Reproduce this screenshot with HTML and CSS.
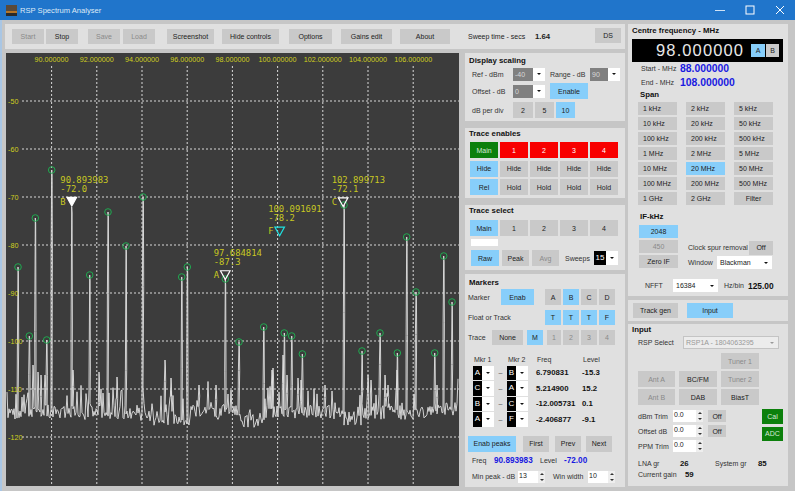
FILE: index.html
```html
<!DOCTYPE html>
<html lang="en">
  <head>
    <meta charset="UTF-8" />
    <title>RSP Spectrum Analyser</title>
    <link rel="stylesheet" href="styles.css">
  </head>
  <body>
    <header class="titlebar">
      <svg class="app-icon" width="11" height="11" viewBox="0 0 11 11">
        <rect width="11" height="11" fill="#5a4a3a" />
        <rect y="6" width="11" height="2" fill="#b5762a" />
        <rect y="8" width="11" height="3" fill="#2b2b2b" />
      </svg>
      <span class="app-title">RSP Spectrum Analyser</span>
      <div class="win-controls">
        <svg width="10" height="10" viewBox="0 0 10 10"><path d="M0 5.5h10" stroke="#cfe2f5" fill="none" /></svg>
        <svg width="10" height="10" viewBox="0 0 10 10"><rect x="1" y="1" width="8" height="8" stroke="#fff" fill="none" /></svg>
        <svg width="10" height="10" viewBox="0 0 10 10"><path d="M1 1l8 8M9 1l-8 8" stroke="#fff" fill="none" /></svg>
      </div>
    </header>

    <div class="main">
      <div class="left">
        <!-- Top toolbar -->
        <div class="toolbar">
          <button class="btn off w32">Start</button>
          <button class="btn w32 ml2">Stop</button>
          <button class="btn off w32 ml10">Save</button>
          <button class="btn off w32 ml3">Load</button>
          <button class="btn w47 ml12">Screenshot</button>
          <button class="btn w57 ml8">Hide controls</button>
          <button class="btn w43 ml10">Options</button>
          <button class="btn w51 ml9">Gains edit</button>
          <button class="btn w50 ml8">About</button>
          <span class="sweep-label">Sweep time - secs</span>
          <span class="sweep-value">1.64</span>
          <button class="btn ds-btn">DS</button>
        </div>

        <div class="left-body">
          <div class="plot"><svg id="plot" width="453" height="433" viewBox="6 53 453 433"></svg></div>

          <div class="mid">
            <section class="panel panel-scaling">
              <h3 class="title">Display scaling</h3>
              <div class="row h14">
                <span class="lbl w41">Ref - dBm</span>
                <span class="combo grey w32"><span class="val">-40</span><span class="arr"></span></span>
                <span class="lbl w40 ml5">Range - dB</span>
                <span class="combo grey w30"><span class="val">90</span><span class="arr"></span></span>
              </div>
              <div class="row h16 mt2">
                <span class="lbl w41">Offset - dB</span>
                <span class="combo grey w32"><span class="val">0</span><span class="arr"></span></span>
                <button class="btn on w38 ml5">Enable</button>
              </div>
              <div class="row h16 mt3">
                <span class="lbl w41">dB per div</span>
                <button class="btn w20">2</button>
                <button class="btn w19 ml2">5</button>
                <button class="btn on w19 ml2">10</button>
              </div>
            </section>

            <section class="panel panel-enables">
              <h3 class="title">Trace enables</h3>
              <div class="trace-grid">
                <button class="btn green">Main</button>
                <button class="btn red">1</button>
                <button class="btn red">2</button>
                <button class="btn red">3</button>
                <button class="btn red">4</button>
                <button class="btn on">Hide</button>
                <button class="btn">Hide</button>
                <button class="btn">Hide</button>
                <button class="btn">Hide</button>
                <button class="btn">Hide</button>
                <button class="btn on">Rel</button>
                <button class="btn">Hold</button>
                <button class="btn">Hold</button>
                <button class="btn">Hold</button>
                <button class="btn">Hold</button>
              </div>
            </section>

            <section class="panel panel-select">
              <h3 class="title">Trace select</h3>
              <div class="trace-grid mt3">
                <button class="btn on">Main</button>
                <button class="btn">1</button>
                <button class="btn">2</button>
                <button class="btn">3</button>
                <button class="btn">4</button>
              </div>
              <div class="colour-box"></div>
              <div class="row h16 mt4 ml1">
                <button class="btn on w28">Raw</button>
                <button class="btn w27 ml3">Peak</button>
                <button class="btn off w27 ml3">Avg</button>
                <span class="lbl w29 ml6">Sweeps</span>
                <span class="combo dark w24"><span class="val">15</span><span class="arr"></span></span>
              </div>
            </section>

            <section class="panel panel-markers">
              <h3 class="title">Markers</h3>
              <div class="row h16">
                <span class="lbl w33">Marker</span>
                <button class="btn on w33">Enab</button>
                <button class="btn w16 ml11">A</button>
                <button class="btn on w16 ml2">B</button>
                <button class="btn w16 ml2">C</button>
                <button class="btn w16 ml2">D</button>
              </div>
              <div class="row h15 mt5">
                <span class="lbl w77">Float or Track</span>
                <button class="btn on w16">T</button>
                <button class="btn on w16 ml2">T</button>
                <button class="btn on w16 ml2">T</button>
                <button class="btn on w16 ml2">F</button>
              </div>
              <div class="row h15 mt5">
                <span class="lbl w24">Trace</span>
                <button class="btn w31">None</button>
                <button class="btn on w16 ml4">M</button>
                <button class="btn off w14 ml4">1</button>
                <button class="btn off w16 ml2">2</button>
                <button class="btn off w16 ml2">3</button>
                <button class="btn off w16 ml2">4</button>
              </div>

              <div class="mk-table">
                <span class="mk-head">Mkr 1</span><span></span><span class="mk-head">Mkr 2</span><span></span><span class="mk-head">Freq</span><span class="mk-head">Level</span>

                <span class="combo dark"><span class="val">A</span><span class="arr"></span></span><span class="dash">&ndash;</span>
                <span class="combo dark"><span class="val">B</span><span class="arr"></span></span><span></span>
                <b>6.790831</b><b>-15.3</b>

                <span class="combo dark"><span class="val">C</span><span class="arr"></span></span><span class="dash">&ndash;</span>
                <span class="combo dark"><span class="val">A</span><span class="arr"></span></span><span></span>
                <b>5.214900</b><b>15.2</b>

                <span class="combo dark"><span class="val">B</span><span class="arr"></span></span><span class="dash">&ndash;</span>
                <span class="combo dark"><span class="val">C</span><span class="arr"></span></span><span></span>
                <b>-12.005731</b><b>0.1</b>

                <span class="combo dark"><span class="val">A</span><span class="arr"></span></span><span class="dash">&ndash;</span>
                <span class="combo dark"><span class="val">F</span><span class="arr"></span></span><span></span>
                <b>-2.406877</b><b>-9.1</b>
              </div>

              <div class="row h16 peaks">
                <button class="btn on w48">Enab peaks</button>
                <button class="btn w26 ml7">First</button>
                <button class="btn w26 ml6">Prev</button>
                <button class="btn w26 ml5">Next</button>
              </div>
              <div class="row h18 ml4">
                <span class="lbl w22">Freq</span>
                <b class="blue w46">90.893983</b>
                <span class="lbl w24">Level</span>
                <b class="blue">-72.00</b>
              </div>
              <div class="row h14 ml4">
                <span class="lbl w46">Min peak - dB</span>
                <span class="spin w27"><span class="val">13</span><span class="arrows"></span></span>
                <span class="lbl w35 ml8">Win width</span>
                <span class="spin w27"><span class="val">10</span><span class="arrows"></span></span>
              </div>
            </section>
          </div>
        </div>
      </div>

      <div class="right">
        <section class="panel panel-centre">
          <h3 class="title">Centre frequency - MHz</h3>
          <div class="freq-display">
            <span class="freq-digits">98.000000</span>
            <button class="btn on w14 h13">A</button>
            <button class="btn w13 h13 ml1">B</button>
          </div>
          <div class="row freq-row">
            <span class="lbl w39">Start - MHz</span><b class="freq-val">88.000000</b>
          </div>
          <div class="row freq-row">
            <span class="lbl w39">End - MHz</span><b class="freq-val">108.000000</b>
          </div>
          <h3 class="title sub">Span</h3>
          <div class="span-grid">
            <button class="btn">1 kHz</button>
            <button class="btn">2 kHz</button>
            <button class="btn">5 kHz</button>
            <button class="btn">10 kHz</button>
            <button class="btn">20 kHz</button>
            <button class="btn">50 kHz</button>
            <button class="btn">100 kHz</button>
            <button class="btn">200 kHz</button>
            <button class="btn">500 kHz</button>
            <button class="btn">1 MHz</button>
            <button class="btn">2 MHz</button>
            <button class="btn">5 MHz</button>
            <button class="btn">10 MHz</button>
            <button class="btn on">20 MHz</button>
            <button class="btn">50 MHz</button>
            <button class="btn">100 MHz</button>
            <button class="btn">200 MHz</button>
            <button class="btn">500 MHz</button>
            <button class="btn">1 GHz</button>
            <button class="btn">2 GHz</button>
            <button class="btn filter">Filter</button>
          </div>
          <h3 class="title sub if-title">IF-kHz</h3>
          <div class="if-section">
            <div class="if-col">
              <button class="btn on">2048</button>
              <button class="btn off">450</button>
              <button class="btn">Zero IF</button>
            </div>
            <div class="if-side">
              <div class="row h14">
                <span class="lbl w61">Clock spur removal</span>
                <button class="btn w24">Off</button>
              </div>
              <div class="row h14 mt1">
                <span class="lbl w29">Window</span>
                <span class="combo white w55"><span class="val">Blackman</span><span class="arr"></span></span>
              </div>
            </div>
          </div>
          <div class="row h14 nfft">
            <span class="lbl w28">NFFT</span>
            <span class="combo white w45"><span class="val">16384</span><span class="arr"></span></span>
            <span class="lbl w24 ml6">Hz/bin</span>
            <b class="hzbin">125.00</b>
          </div>
        </section>

        <div class="track-strip">
          <button class="btn w45">Track gen</button>
          <button class="btn on w46 ml9">Input</button>
        </div>

        <section class="panel panel-input">
          <h3 class="title">Input</h3>
          <div class="row h13 ml6">
            <span class="lbl w45">RSP Select</span>
            <span class="combo locked w96"><span class="val">RSP1A - 1804063295</span><span class="arr"></span></span>
          </div>
          <div class="ant-grid">
            <button class="btn off tuner1">Tuner 1</button>
            <button class="btn off">Ant A</button>
            <button class="btn">BC/FM</button>
            <button class="btn off">Tuner 2</button>
            <button class="btn off">Ant B</button>
            <button class="btn">DAB</button>
            <button class="btn">BiasT</button>
          </div>
          <div class="trim">
            <div class="trim-rows">
              <div class="row h15">
                <span class="lbl w35">dBm Trim</span>
                <span class="spin w30"><span class="val">0.0</span><span class="arrows"></span></span>
                <button class="btn w18 h12 ml5">Off</button>
              </div>
              <div class="row h15">
                <span class="lbl w35">Offset dB</span>
                <span class="spin w30"><span class="val">0.0</span><span class="arrows"></span></span>
                <button class="btn w18 h12 ml5">Off</button>
              </div>
              <div class="row h15">
                <span class="lbl w35">PPM Trim</span>
                <span class="spin w30"><span class="val">0.0</span><span class="arrows"></span></span>
              </div>
            </div>
            <div class="cal-col">
              <button class="btn green h15">Cal</button>
              <button class="btn green h14">ADC</button>
            </div>
          </div>
          <div class="row h12 ml6 gain-first">
            <span class="lbl w42">LNA gr</span><b class="w35">26</b>
            <span class="lbl w43">System gr</span><b>85</b>
          </div>
          <div class="row h11 ml6">
            <span class="lbl w47">Current gain</span><b>59</b>
          </div>
        </section>
      </div>
    </div>

    <script src="plot.js"></script>
  </body>
</html>
```

FILE: styles.css
```css
/* General Styling */
* {
  margin: 0;
  padding: 0;
  box-sizing: border-box;
}

body {
  width: 795px;
  height: 491px;
  overflow: hidden;
  background-color: #c6c6c6;
  font-family: "Liberation Sans", Arial, sans-serif;
  font-size: 7px;
  color: #222;
}

b {
  font-size: 7.8px;
  color: #111;
}

.titlebar {
  height: 20px;
  background-color: #2075cb;
  display: flex;
  align-items: center;
  padding-left: 6px;
  color: #dfeaf6;
}

.app-icon {
  margin-right: 3px;
}

.app-title {
  font-size: 7.6px;
}

.win-controls {
  margin-left: auto;
  display: flex;
  gap: 20px;
  padding-right: 10px;
}

.main {
  display: flex;
  height: 471px;
  padding: 4px 0 0 5px;
  gap: 5px;
  border-left: 2px solid #a9c6e4;
  margin-left: 0;
}

.left {
  width: 618px;
  margin-left: -2px;
}

/* Toolbar */
.toolbar {
  width: 620px;
  height: 25px;
  background-color: #e0e0e0;
  display: flex;
  align-items: center;
  padding-left: 7px;
}

.toolbar .btn {
  height: 15px;
}

.sweep-label {
  margin-left: 18px;
  width: 67px;
}

.sweep-value {
  font-size: 7.8px;
  font-weight: bold;
  width: 60px;
}

.toolbar .ds-btn {
  width: 26px;
  margin-top: -3px;
}

.left-body {
  display: flex;
  margin-top: 4px;
  padding-left: 1px;
  gap: 6px;
  width: 621px;
}

.plot {
  width: 453px;
  height: 433px;
  background-color: #3c3c3c;
}

.plot svg {
  display: block;
}

.plot text {
  font-family: "Liberation Sans", Arial, sans-serif;
  font-size: 7.2px;
  fill: #d0d020;
}

.plot text.mark {
  font-family: "DejaVu Sans Mono", monospace;
  font-size: 8.9px;
  fill: #c8c822;
}

.mid {
  width: 160px;
}

/* Panels */
.panel {
  background-color: #e0e0e0;
}

.title {
  font-size: 7.8px;
  font-weight: bold;
  height: 12px;
  line-height: 12px;
  color: #111;
}

.panel-scaling {
  height: 68px;
  padding: 2px 0 0 7px;
}

.panel-scaling .title {
  margin-left: -3px;
}

.panel-enables {
  height: 70px;
  margin-top: 7px;
  padding: 0 0 0 5px;
}

.panel-enables .title {
  height: 14px;
  line-height: 12px;
  margin-left: -1px;
}

.panel-select {
  height: 65px;
  margin-top: 7px;
  padding-left: 5px;
}

.panel-select .title {
  margin-left: -1px;
}

.panel-markers {
  height: 213px;
  margin-top: 4px;
  padding: 3px 0 0 3px;
}

.panel-markers .title {
  margin-left: 1px;
}

.trace-grid {
  display: grid;
  grid-template-columns: repeat(5, 28px);
  grid-auto-rows: 16px;
  gap: 2.5px 2px;
}

.colour-box {
  width: 27px;
  height: 7px;
  margin: 3px 0 0 1px;
  background-color: #fff;
}

.row {
  display: flex;
  align-items: center;
}

.lbl {
  flex-shrink: 0;
  white-space: nowrap;
  color: #333;
}

/* Buttons */
.btn {
  display: flex;
  align-items: center;
  justify-content: center;
  flex-shrink: 0;
  height: 100%;
  border: none;
  background-color: #c9c9c9;
  color: #222;
  font-family: inherit;
  font-size: 7px;
  white-space: nowrap;
}

.btn.on {
  background-color: #87cefa;
}

.btn.off {
  color: #8a8a8a;
}

.btn.green {
  background-color: #0c800c;
  color: #d8e8d8;
}

.btn.red {
  background-color: #f80000;
  color: #fff;
}

/* Combo boxes */
.combo {
  display: flex;
  height: 13px;
  flex-shrink: 0;
  background-color: #fff;
}

.combo .val {
  flex: 1;
  min-width: 0;
  padding-left: 2px;
  line-height: 13px;
  white-space: nowrap;
  overflow: hidden;
}

.combo .arr {
  width: 12px;
  position: relative;
}

.combo .arr::after {
  content: "";
  position: absolute;
  left: 4px;
  top: 50%;
  margin-top: -1px;
  border-left: 2px solid transparent;
  border-right: 2px solid transparent;
  border-top: 2px solid #111;
}

.combo.grey .val {
  background-color: #808080;
  color: #d8d8d8;
}

.combo.dark {
  height: 14.5px;
}

.combo.dark .val {
  background-color: #000;
  color: #fff;
  font-size: 8px;
  line-height: 14.5px;
  padding-left: 0;
  text-align: center;
}

.combo.white .val {
  padding-left: 3px;
}

.combo.locked {
  background-color: #ececec;
  border: 1px solid #c4c4c4;
  color: #999;
}

.combo.locked .val {
  line-height: 11px;
}

.combo.locked .arr::after {
  border-top-color: #999;
}

/* Number spinners */
.spin {
  display: flex;
  height: 12px;
  flex-shrink: 0;
  background-color: #fff;
}

.spin .val {
  flex: 1;
  padding-left: 1px;
  line-height: 10px;
}

.spin .arrows {
  width: 7px;
  position: relative;
  background-color: #eee;
}

.spin .arrows::before,
.spin .arrows::after {
  content: "";
  position: absolute;
  left: 1.5px;
  border-left: 2px solid transparent;
  border-right: 2px solid transparent;
}

.spin .arrows::before {
  top: 2px;
  border-bottom: 2px solid #333;
}

.spin .arrows::after {
  bottom: 2px;
  border-top: 2px solid #333;
}

/* Markers table */
.mk-table {
  display: grid;
  grid-template-columns: 21px 13px 21px 8px 46px auto;
  grid-template-rows: 12px repeat(4, 15.5px);
  align-items: center;
  margin: 8px 0 0 5px;
  height: 74px;
}

.mk-head {
  padding-left: 1px;
  color: #333;
}

.dash {
  text-align: center;
  color: #555;
}

.peaks {
  margin-top: 8.5px;
}

.blue {
  color: #1a1ae0;
  font-size: 8.2px;
}

/* Right column */
.right {
  width: 160px;
}

.panel-centre {
  height: 272px;
  padding: 1px 0 0 4px;
}

.freq-display {
  width: 151px;
  height: 23px;
  margin-top: 2px;
  background-color: #000;
  display: flex;
  align-items: center;
  justify-content: flex-end;
  padding-right: 4px;
}

.freq-digits {
  color: #e8e8e8;
  font-size: 16.5px;
  letter-spacing: 1.1px;
  margin-right: 7px;
}

.freq-row {
  height: 13.5px;
  padding-left: 9px;
}

.panel-centre .freq-row:first-of-type {
  margin-top: 1px;
}

.freq-val {
  color: #1a1ae0;
  font-size: 10.4px;
}

.title.sub {
  margin-left: 8px;
}

.span-grid {
  display: grid;
  grid-template-columns: repeat(3, 39px);
  grid-auto-rows: 12.7px;
  gap: 2.3px 9px;
  margin: 1px 0 0 6px;
}

.span-grid .btn {
  justify-content: flex-start;
  padding-left: 5px;
}

.span-grid .filter {
  justify-content: center;
  padding-left: 0;
}

.title.if-title {
  margin-top: 6px;
}

.if-section {
  display: flex;
  margin: 2px 0 0 7px;
}

.if-col {
  display: grid;
  grid-template-columns: 39px;
  grid-auto-rows: 13px;
  gap: 2px;
}

.if-side {
  margin: 16px 0 0 10px;
}

.nfft {
  margin: 9px 0 0 13px;
}

.hzbin {
  font-size: 8.4px;
}

.track-strip {
  height: 21px;
  margin-top: 4px;
  padding: 3px 5px;
  background-color: #e0e0e0;
  display: flex;
}

.panel-input {
  height: 162px;
  margin-top: 3px;
  padding-left: 4px;
}

.ant-grid {
  display: grid;
  grid-template-columns: 37px 38px 38px;
  grid-auto-rows: 16px;
  gap: 2px 4px;
  margin: 4px 0 0 6px;
}

.tuner1 {
  grid-column: 3;
}

.trim {
  display: flex;
  margin: 3.5px 0 0 6px;
}

.trim-rows {
  width: 124px;
}

.cal-col {
  width: 21px;
  display: flex;
  flex-direction: column;
  gap: 3px;
}

.gain-first {
  margin-top: 3.5px;
}

/* Sizes shared by many controls */
.h11 { height: 11px; }
.h12 { height: 12px; }
.h13 { height: 13px; }
.h14 { height: 14px; }
.h15 { height: 15px; }
.h16 { height: 16px; }
.h18 { height: 18px; }
.w13 { width: 13px; }
.w14 { width: 14px; }
.w16 { width: 16px; }
.w18 { width: 18px; }
.w19 { width: 19px; }
.w20 { width: 20px; }
.w22 { width: 22px; }
.w24 { width: 24px; }
.w26 { width: 26px; }
.w27 { width: 27px; }
.w28 { width: 28px; }
.w29 { width: 29px; }
.w30 { width: 30px; }
.w31 { width: 31px; }
.w32 { width: 32px; }
.w33 { width: 33px; }
.w35 { width: 35px; }
.w38 { width: 38px; }
.w39 { width: 39px; }
.w40 { width: 40px; }
.w41 { width: 41px; }
.w42 { width: 42px; }
.w43 { width: 43px; }
.w45 { width: 45px; }
.w46 { width: 46px; }
.w47 { width: 47px; }
.w48 { width: 48px; }
.w50 { width: 50px; }
.w51 { width: 51px; }
.w55 { width: 55px; }
.w57 { width: 57px; }
.w61 { width: 61px; }
.w77 { width: 77px; }
.w96 { width: 96px; }
.ml1 { margin-left: 1px; }
.ml2 { margin-left: 2px; }
.ml3 { margin-left: 3px; }
.ml4 { margin-left: 4px; }
.ml5 { margin-left: 5px; }
.ml6 { margin-left: 6px; }
.ml7 { margin-left: 7px; }
.ml8 { margin-left: 8px; }
.ml9 { margin-left: 9px; }
.ml10 { margin-left: 10px; }
.ml11 { margin-left: 11px; }
.ml12 { margin-left: 12px; }
.mt1 { margin-top: 1px; }
.mt2 { margin-top: 2px; }
.mt3 { margin-top: 3px; }
.mt4 { margin-top: 4px; }
.mt5 { margin-top: 5px; }
```

FILE: plot.js
```js
// Draws the spectrum trace, grid, peak circles and markers into the plot svg
const svg = document.getElementById("plot");
const NS = "http://www.w3.org/2000/svg";

function add(tag, attrs, text) {
  const el = document.createElementNS(NS, tag);
  for (const key in attrs) el.setAttribute(key, attrs[key]);
  if (text) el.textContent = text;
  svg.appendChild(el);
  return el;
}

// Fixed seed so the noise floor is the same on every load
let seed = 20240;
function rand() {
  seed = (seed * 1664525 + 1013904223) % 4294967296;
  return seed / 4294967296;
}

const freqX = (f) => 51.6 + (f - 90) * 22.6;
const dbY = (db) => 53 + (-40 - db) * 4.8;

// Peaks with a green circle, in pixels
const peaks = [
  [18, 267], [29.3, 336], [35.3, 218], [46.7, 340], [51.7, 170], [89.7, 275],
  [108, 212], [126, 246], [143, 197], [181.7, 277], [187.3, 267], [225.3, 279],
  [239, 342], [263.7, 327], [284.3, 333], [291.7, 336], [302.3, 354], [344, 205],
  [362, 351], [380, 333], [397.3, 353], [406.7, 237], [416, 292], [434.7, 353],
  [443.7, 256], [452, 302],
];

// Peaks hidden by a marker, and the smaller ones with no circle
const tallLines = [[71.7, 207]];
const smallPeaks = [
  [33, 365], [38, 372], [41, 375], [45, 375], [73, 370], [99, 372], [117, 377],
  [165, 360], [171, 378], [199, 385], [216, 385], [272, 370], [273, 368],
  [283, 355], [287, 375], [298, 378], [301, 380], [325, 385], [368, 375],
  [371, 380], [385, 375], [388, 385], [397, 370], [437, 385],
];

function floorY(x) {
  let base = 412;
  if (x > 140 && x < 190) base = 418;
  if (x > 240 && x < 265) base = 420;
  if (x > 340 && x < 365) base = 418;
  if (x > 425) base = 410;
  return base + (rand() - 0.5) * 15;
}

// Noise floor first, peaks are spliced in at their x position
const spikes = peaks.concat(tallLines).concat(smallPeaks).sort((a, b) => a[0] - b[0]);
const pts = [];
let next = 0;
for (let x = 7; x <= 458; x++) {
  while (next < spikes.length && spikes[next][0] <= x) {
    const [px, py] = spikes[next];
    const shoulder = py + (floorY(px) - py) * (0.35 + rand() * 0.4);
    pts.push([px - 0.6, shoulder], [px, py], [px + 0.4, py + 6], [px + 0.7, shoulder]);
    next++;
  }
  let y = floorY(x);
  if (rand() < 0.13) y -= 8 + rand() * 18;
  pts.push([x, y]);
}
add("polyline", {
  points: pts.map((p) => p[0].toFixed(1) + "," + p[1].toFixed(1)).join(" "),
  fill: "none",
  stroke: "#e2e2e2",
  "stroke-width": 0.9,
});

// Grid and scale labels
for (let i = 0; i < 9; i++) {
  const x = freqX(90 + i * 2);
  add("line", { x1: x, y1: 66, x2: x, y2: 486, stroke: "#d8d8d8", "stroke-dasharray": "2 2" });
  const label = (90 + i * 2).toFixed(6);
  add("text", { x: x, y: 62, "text-anchor": "middle" }, label);
}
for (let db = -50; db >= -120; db -= 10) {
  const y = dbY(db);
  add("line", { x1: 22, y1: y, x2: 459, y2: y, stroke: "#d8d8d8", "stroke-dasharray": "2 2" });
  add("text", { x: 8, y: y + 2.5 }, String(db));
}

for (const [x, y] of peaks) {
  add("circle", { cx: x, cy: y, r: 3.3, fill: "none", stroke: "#1faa50" });
}

// Markers: name, freq text, level text, freq, level, colour, filled
const markers = [
  ["B", "90.893983", "-72.0", 90.893983, -72.0, "#fff", true],
  ["A", "97.684814", "-87.3", 97.684814, -87.3, "#fff", false],
  ["F", "100.091691", "-78.2", 100.091691, -78.2, "#1fe0e0", false],
  ["C", "102.899713", "-72.1", 102.899713, -72.1, "#fff", false],
];
for (const [name, ftext, ltext, f, db, colour, filled] of markers) {
  const x = freqX(f);
  const y = dbY(db);
  add("path", {
    d: `M${x - 4.8} ${y - 9.3}h9.6L${x} ${y - 0.6}z`,
    fill: filled ? colour : "none",
    stroke: colour,
    "stroke-width": 1.2,
  });
  const left = x - 11.5;
  add("text", { class: "mark", x: left, y: y - 24 }, ftext);
  add("text", { class: "mark", x: left, y: y - 15 }, ltext);
  add("text", { class: "mark", x: left, y: y - 2 }, name);
}
```
